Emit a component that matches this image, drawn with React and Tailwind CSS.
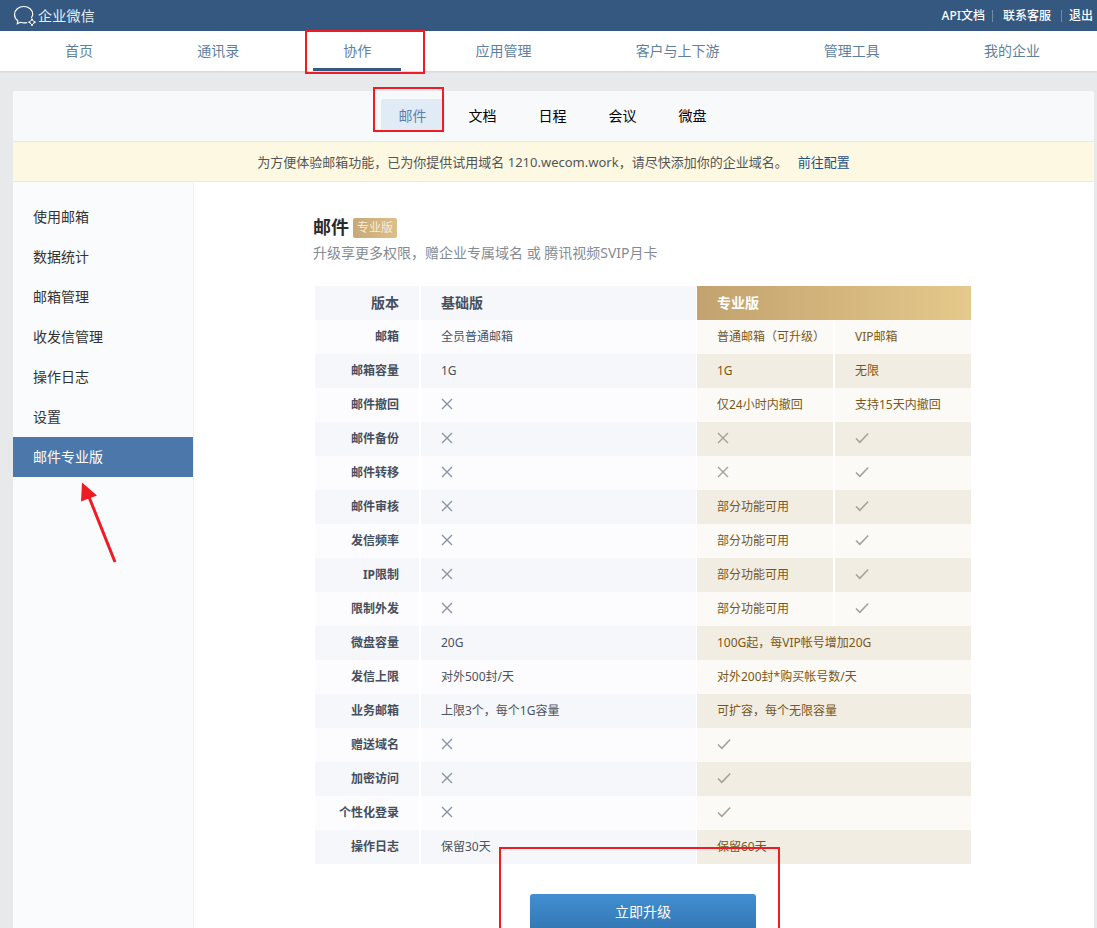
import React from 'react';

const FONT = 'font-["Noto_Sans","Noto_Sans_CJK_SC",sans-serif]';

const navItems = ['首页', '通讯录', '协作', '应用管理', '客户与上下游', '管理工具', '我的企业'];
const tabs = ['邮件', '文档', '日程', '会议', '微盘'];
const sideItems = ['使用邮箱', '数据统计', '邮箱管理', '收发信管理', '操作日志', '设置', '邮件专业版'];

const X = 'x';
const V = 'v';
const rows = [
  ['邮箱', '全员普通邮箱', '普通邮箱（可升级）', 'VIP邮箱'],
  ['邮箱容量', '1G', '1G', '无限'],
  ['邮件撤回', X, '仅24小时内撤回', '支持15天内撤回'],
  ['邮件备份', X, X, V],
  ['邮件转移', X, X, V],
  ['邮件审核', X, '部分功能可用', V],
  ['发信频率', X, '部分功能可用', V],
  ['IP限制', X, '部分功能可用', V],
  ['限制外发', X, '部分功能可用', V],
  ['微盘容量', '20G', '100G起，每VIP帐号增加20G'],
  ['发信上限', '对外500封/天', '对外200封*购买帐号数/天'],
  ['业务邮箱', '上限3个，每个1G容量', '可扩容，每个无限容量'],
  ['赠送域名', X, V],
  ['加密访问', X, V],
  ['个性化登录', X, V],
  ['操作日志', '保留30天', '保留60天'],
];

function Cross({ color }) {
  return (
    <svg className="-mt-[2px]" width="12" height="12" viewBox="0 0 12 12" fill="none" stroke={color} strokeWidth="1.4">
      <path d="M1 1l10 10M11 1L1 11" />
    </svg>
  );
}

function Check() {
  return (
    <svg className="-mt-[2px]" width="14" height="12" viewBox="0 0 14 12" fill="none" stroke="#a89f96" strokeWidth="1.5">
      <path d="M1 6.500l3.800 3.800L13.200 1.400" />
    </svg>
  );
}

function Value({ value, pro }) {
  if (value === X) return <Cross color={pro ? '#a89f96' : '#8b93a6'} />;
  if (value === V) return <Check />;
  return value;
}

function Logo() {
  return (
    <svg width="24" height="22" viewBox="0 0 24 22" fill="none" stroke="#fff" strokeWidth="1.200">
      <path d="M18.500 12.500c.7-1 1.200-2 1.200-3.300C19.700 5 15.800 1.500 10.800 1.500S1.500 5 1.500 9.500c0 2.600 1.300 4.800 3.300 6.300l-.5 3 3.100-1.500c1.200.4 2.400.6 3.700.6 1 0 1.800-.1 2.600-.3" strokeLinecap="round" />
      <path d="M19 14.500l2.700 2.700-2.700 2.700-2.700-2.700Z" strokeWidth="1" />
      <circle cx="19" cy="14.500" r="1" fill="#fff" stroke="none" />
      <circle cx="21.700" cy="17.200" r="1" fill="#fff" stroke="none" />
      <circle cx="19" cy="19.900" r="1" fill="#fff" stroke="none" />
      <circle cx="16.300" cy="17.200" r="1" fill="#fff" stroke="none" />
    </svg>
  );
}

function TableRow({ row, index }) {
  const dark = index % 2 === 1;
  const basicBg = dark ? 'bg-[#f5f7fb]' : 'bg-[#fcfcfe]';
  const proBg = dark ? 'bg-[#f2ede3]' : 'bg-[#fbfaf6]';
  const [label, basic, pro1, pro2] = row;
  return (
    <div className="flex h-[34px] text-xs">
      <div className={`w-[104px] mr-[2px] pr-[20px] flex items-center justify-end font-bold text-[#454f60] ${basicBg}`}>{label}</div>
      <div className={`w-[275px] mr-[1px] pl-[20px] flex items-center text-[#4b5261] ${basicBg}`}>
        <Value value={basic} />
      </div>
      {pro2 === undefined ? (
        <div className={`w-[274px] pl-[20px] flex items-center text-[#7a5718] ${proBg}`}>
          <Value value={pro1} pro />
        </div>
      ) : (
        <>
          <div className={`w-[136px] mr-[2px] pl-[20px] flex items-center text-[#7a5718] ${proBg}`}>
            <Value value={pro1} pro />
          </div>
          <div className={`w-[136px] pl-[20px] flex items-center text-[#7a5718] ${proBg}`}>
            <Value value={pro2} pro />
          </div>
        </>
      )}
    </div>
  );
}

export default function App() {
  return (
    <div className={`relative h-[928px] overflow-hidden bg-[#e8e9eb] ${FONT}`}>
      <div className="h-[31px] bg-[#34587f] flex items-center justify-between pl-[13px] pr-[4px] text-white">
        <div className="flex items-center gap-[1px]">
          <Logo />
          <span className="text-sm text-[#e8edf3] tracking-[0.25px]">企业微信</span>
        </div>
        <div className="flex items-center text-xs font-medium">
          <span>API文档</span>
          <span className="w-px h-[12px] bg-[#6f8cab] ml-[7px] mr-[10px]"></span>
          <span>联系客服</span>
          <span className="w-px h-[12px] bg-[#6f8cab] ml-[10px] mr-[7px]"></span>
          <span>退出</span>
        </div>
      </div>

      <div className="h-[40px] bg-white shadow-[0_1px_2px_rgba(0,0,0,0.1)] flex justify-between pl-[35px] pr-[27px]">
        {navItems.map((item) => (
          <div key={item} className="relative px-[30px] flex items-center text-sm text-[#5f7f9f]">
            {item}
            {item === '协作' && <div className="absolute left-0 right-0 bottom-0 h-[3px] bg-[#34587f]"></div>}
          </div>
        ))}
      </div>

      <div className="mt-[20px] ml-[13px] mr-[3px] h-[837px] bg-white rounded-t-[3px] overflow-hidden">
        <div className="h-[50px] bg-[#f8f9fb] flex justify-center items-start gap-[6px] pt-[8px] pr-[2px]">
          {tabs.map((tab, i) => (
            <div
              key={tab}
              className={`w-[64px] h-[32px] pt-px flex items-center justify-center text-sm rounded-t-[3px] ${
                i === 0 ? 'bg-[#e1ebf6] text-[#5a80b0]' : 'text-black'
              }`}
            >
              {tab}
            </div>
          ))}
        </div>

        <div className="h-[41px] bg-[#fdf8e2] border-y border-[#e8e8e6] flex items-center justify-center text-[13px] text-[#555555] pt-[2px]">
          <span>为方便体验邮箱功能，已为你提供试用域名 1210.wecom.work，请尽快添加你的企业域名。</span>
          <span className="ml-[10px] text-[#23508a]">前往配置</span>
        </div>

        <div className="flex h-full">
          <div className="w-[181px] shrink-0 bg-[#fafbfd] border-r border-[#eeeff2] pt-[15px]">
            {sideItems.map((item, i) => (
              <div
                key={item}
                className={`h-[40px] w-[180px] pl-[20px] flex items-center text-sm ${
                  i === 6 ? 'bg-[#4b77ab] text-white' : 'text-[#333333]'
                }`}
              >
                {item}
              </div>
            ))}
          </div>

          <div className="pl-[119px] pt-[32px]">
            <div className="flex items-center h-[26px]">
              <span className="text-lg font-bold text-[#2b2b2b]">邮件</span>
              <span className="ml-[4px] mt-[2px] w-[44px] h-[20px] rounded-[2px] flex items-center justify-center text-xs text-[#f5ecd9] bg-gradient-to-r from-[#c8a976] to-[#dcc08a]">专业版</span>
            </div>
            <div className="mt-[3px] text-sm text-[#858b94]">升级享更多权限，赠企业专属域名 或 腾讯视频SVIP月卡</div>

            <div className="mt-[23px] ml-[2px] w-[656px]">
              <div className="flex h-[34px] text-sm font-bold">
                <div className="w-[104px] mr-[2px] pr-[20px] flex items-center justify-end bg-[#f5f7fb] text-[#454f60]">版本</div>
                <div className="w-[275px] mr-[1px] pl-[20px] flex items-center bg-[#f5f7fb] text-[#454f60]">基础版</div>
                <div className="w-[274px] pl-[20px] flex items-center text-white bg-gradient-to-r from-[#c2a26e] to-[#e5c98b]">专业版</div>
              </div>
              {rows.map((row, i) => (
                <TableRow key={row[0]} row={row} index={i} />
              ))}
            </div>

            <div className="mt-[30px] ml-[217px] w-[226px] h-[36px] rounded-[3px] bg-gradient-to-b from-[#428fd2] to-[#3477b3] flex items-center justify-center text-sm text-white">
              立即升级
            </div>
          </div>
        </div>
      </div>

      {/* red annotations drawn over the screenshot */}
      <div className="absolute left-[305px] top-[30px] w-[120px] h-[44px] border-[2px] border-[#ee1c25]"></div>
      <div className="absolute left-[373px] top-[87px] w-[71px] h-[45px] border-[2px] border-[#ee1c25]"></div>
      <div className="absolute left-[499px] top-[847px] w-[281px] h-[100px] border-[2px] border-[#ee1c25]"></div>
      <svg className="absolute left-[70px] top-[475px]" width="60" height="95" viewBox="0 0 60 95" fill="none">
        <path d="M45 87L19 22" stroke="#ee1c25" strokeWidth="3" />
        <path d="M12 7.500L11 26.500L27 20.500Z" fill="#ee1c25" />
      </svg>
    </div>
  );
}
